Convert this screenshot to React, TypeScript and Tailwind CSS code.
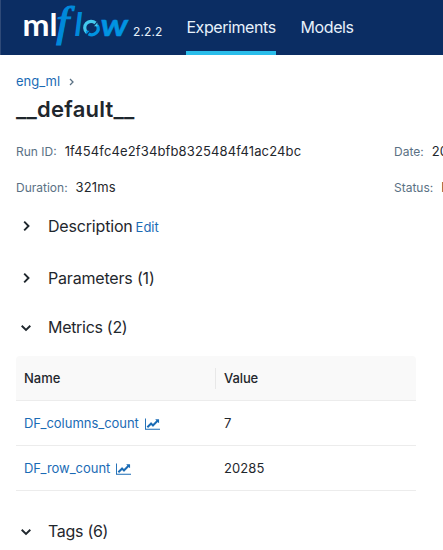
import type { ReactNode } from "react";

function Logo() {
  return (
    <svg width="112" height="48" viewBox="20 0 112 48" className="block shrink-0 overflow-visible" role="img" aria-label="mlflow">
      <g fontFamily="Lato, sans-serif" fontWeight="700">
        <text x="22.600" y="36" fontSize="31" fill="#fff" textLength="35" lengthAdjust="spacingAndGlyphs">ml</text>
        <text x="74.600" y="36" fontSize="32.500" fontStyle="italic" fill="#0089db">l</text>
        <text x="100.400" y="36" fontSize="29.500" fontStyle="italic" fill="#0194e2" stroke="#0194e2" strokeWidth="0.400" textLength="27.500" lengthAdjust="spacingAndGlyphs">w</text>
      </g>
      <text transform="translate(56.2 35.6) scale(1.080 1)" fontSize="43" fontFamily="'Liberation Serif', serif" fontStyle="italic" fill="#0089db" stroke="#0089db" strokeWidth="1.200">f</text>
      <g fill="none" strokeWidth="3.200">
        <path d="M86.800 32.500A6.300 6.300 0 0 1 95.500 23" stroke="#43c9ed" />
        <path d="M97.200 25.200A6.300 6.300 0 0 1 88.500 33.800" stroke="#0194e2" />
      </g>
      <path d="M94 26.300L97.800 26.300L97.300 22.500Z" fill="#43c9ed" />
      <path d="M89.600 30.700L85.800 30.700L86.300 34.500Z" fill="#0194e2" />
    </svg>
  );
}

function Chevron({ open }: { open: boolean }) {
  return (
    <svg width="12" height="12" viewBox="0 0 12 12" fill="none" stroke="#1f272d" strokeWidth="1.9" className="ml-1 mr-4 block shrink-0">
      <path d={open ? "M1.700 4.700L6 8.900L10.300 4.700" : "M4.200 1.700L8.500 6L4.200 10.300"} />
    </svg>
  );
}

function ChartIcon() {
  return (
    <svg width="15" height="12" viewBox="0 0 2048 1536" fill="#1a6bb5" className="mb-px ml-1.5 block shrink-0">
      <path d="M2048 1408v128H0V0h128v1408h1920zM1920 160v435q0 21-19.500 29.500t-35.500-7.500l-121-121-633 633q-10 10-23 10t-23-10l-233-233-416 416-192-192 585-585q10-10 23-10t23 10l233 233 464-464-121-121q-16-16-7.500-35.500t29.500-19.500h435q14 0 23 9t9 23z" />
    </svg>
  );
}

function Section({ open = false, title, children }: { open?: boolean; title: string; children?: ReactNode }) {
  return (
    <div className="flex h-6 items-center">
      <Chevron open={open} />
      <h2 className={`text-[16px] leading-6 text-[#1f272d] ${open ? "tracking-[-0.3px]" : "tracking-[-0.18px]"}`}>{title}</h2>
      {children}
    </div>
  );
}

function Field({ label, value }: { label: string; value: string }) {
  return (
    <div className="flex h-5 items-center whitespace-nowrap">
      <span className="text-[12px] text-[#5a7184]">{label}</span>
      <span className="ml-2 text-[13px] tracking-[0.14px] text-[#1f272d]">{value}</span>
    </div>
  );
}

function Row({ name, value }: { name: string; value: string }) {
  return (
    <div className="flex h-[45px] items-center border-b border-[#ececec] pt-0.5">
      <a className="flex w-[200px] items-center pl-2 text-[13px] tracking-[-0.03px] text-[#1a6bb5]">
        {name}
        <ChartIcon />
      </a>
      <span className="pl-2 text-[13px] tracking-[0.1px] text-[#1f272d]">{value}</span>
    </div>
  );
}

export default function App() {
  return (
    <div className="h-[550px] w-full overflow-hidden bg-white font-['Inter',sans-serif]">
      <header className="flex h-[55px] border-l border-[#2f4a78] bg-[#0b2d63] text-[#e7f1fb]">
        <div className="pl-[19px]">
          <Logo />
        </div>
        <span className="ml-px mt-[22px] text-[12px] leading-5 tracking-[0.1px]">2.2.2</span>
        <nav className="ml-6 flex text-[16px]">
          <a className="h-full w-[90px] border-b-4 border-[#2abdea] pt-[15px] leading-6 tracking-[-0.42px]">Experiments</a>
          <a className="ml-6 pt-[15px] leading-6 tracking-[-0.36px]">Models</a>
        </nav>
      </header>
      <main className="pl-4 pt-[17px]">
        <div className="flex h-5 items-center text-[13px] text-[#1a6bb5]">
          <span>eng_ml</span>
          <svg width="5" height="8" viewBox="0 0 5 8" fill="none" stroke="#5a7184" strokeWidth="1.300" className="ml-[9px]">
            <path d="M1 1L4 4L1 7" />
          </svg>
        </div>
        <h1 className="mt-[3px] text-[22px] font-semibold leading-7 tracking-[0.22px] text-[#1f272d]">__default__</h1>
        <div className="mt-[19px] grid w-[600px] grid-cols-[378px_auto] gap-y-4">
          <Field label="Run ID:" value="1f454fc4e2f34bfb8325484f41ac24bc" />
          <Field label="Date:" value="2023-04-05 10:12:31" />
          <Field label="Duration:" value="321ms" />
          <Field label="Status:" value="FINISHED" />
        </div>
        <div className="mt-4">
          <Section title="Description">
            <a className="ml-[3px] mt-[3px] text-[13px] text-[#1a6bb5]">Edit</a>
          </Section>
        </div>
        <div className="mt-7">
          <Section title="Parameters (1)" />
        </div>
        <div className="mt-[25px]">
          <Section open title="Metrics (2)" />
        </div>
        <div className="mt-[17px] w-[400px]">
          <div className="flex h-[45px] items-center rounded-t border-b border-[#ececec] bg-[#f9f9f9] text-[13px] font-medium text-[#1f272d]">
            <span className="flex h-[21px] w-[200px] items-center border-r border-[#e8e8e8] pl-2 pt-0.5">Name</span>
            <span className="pl-2 pt-0.5 tracking-[-0.1px]">Value</span>
          </div>
          <Row name="DF_columns_count" value="7" />
          <Row name="DF_row_count" value="20285" />
        </div>
        <div className="mt-7">
          <Section open title="Tags (6)" />
        </div>
      </main>
    </div>
  );
}
